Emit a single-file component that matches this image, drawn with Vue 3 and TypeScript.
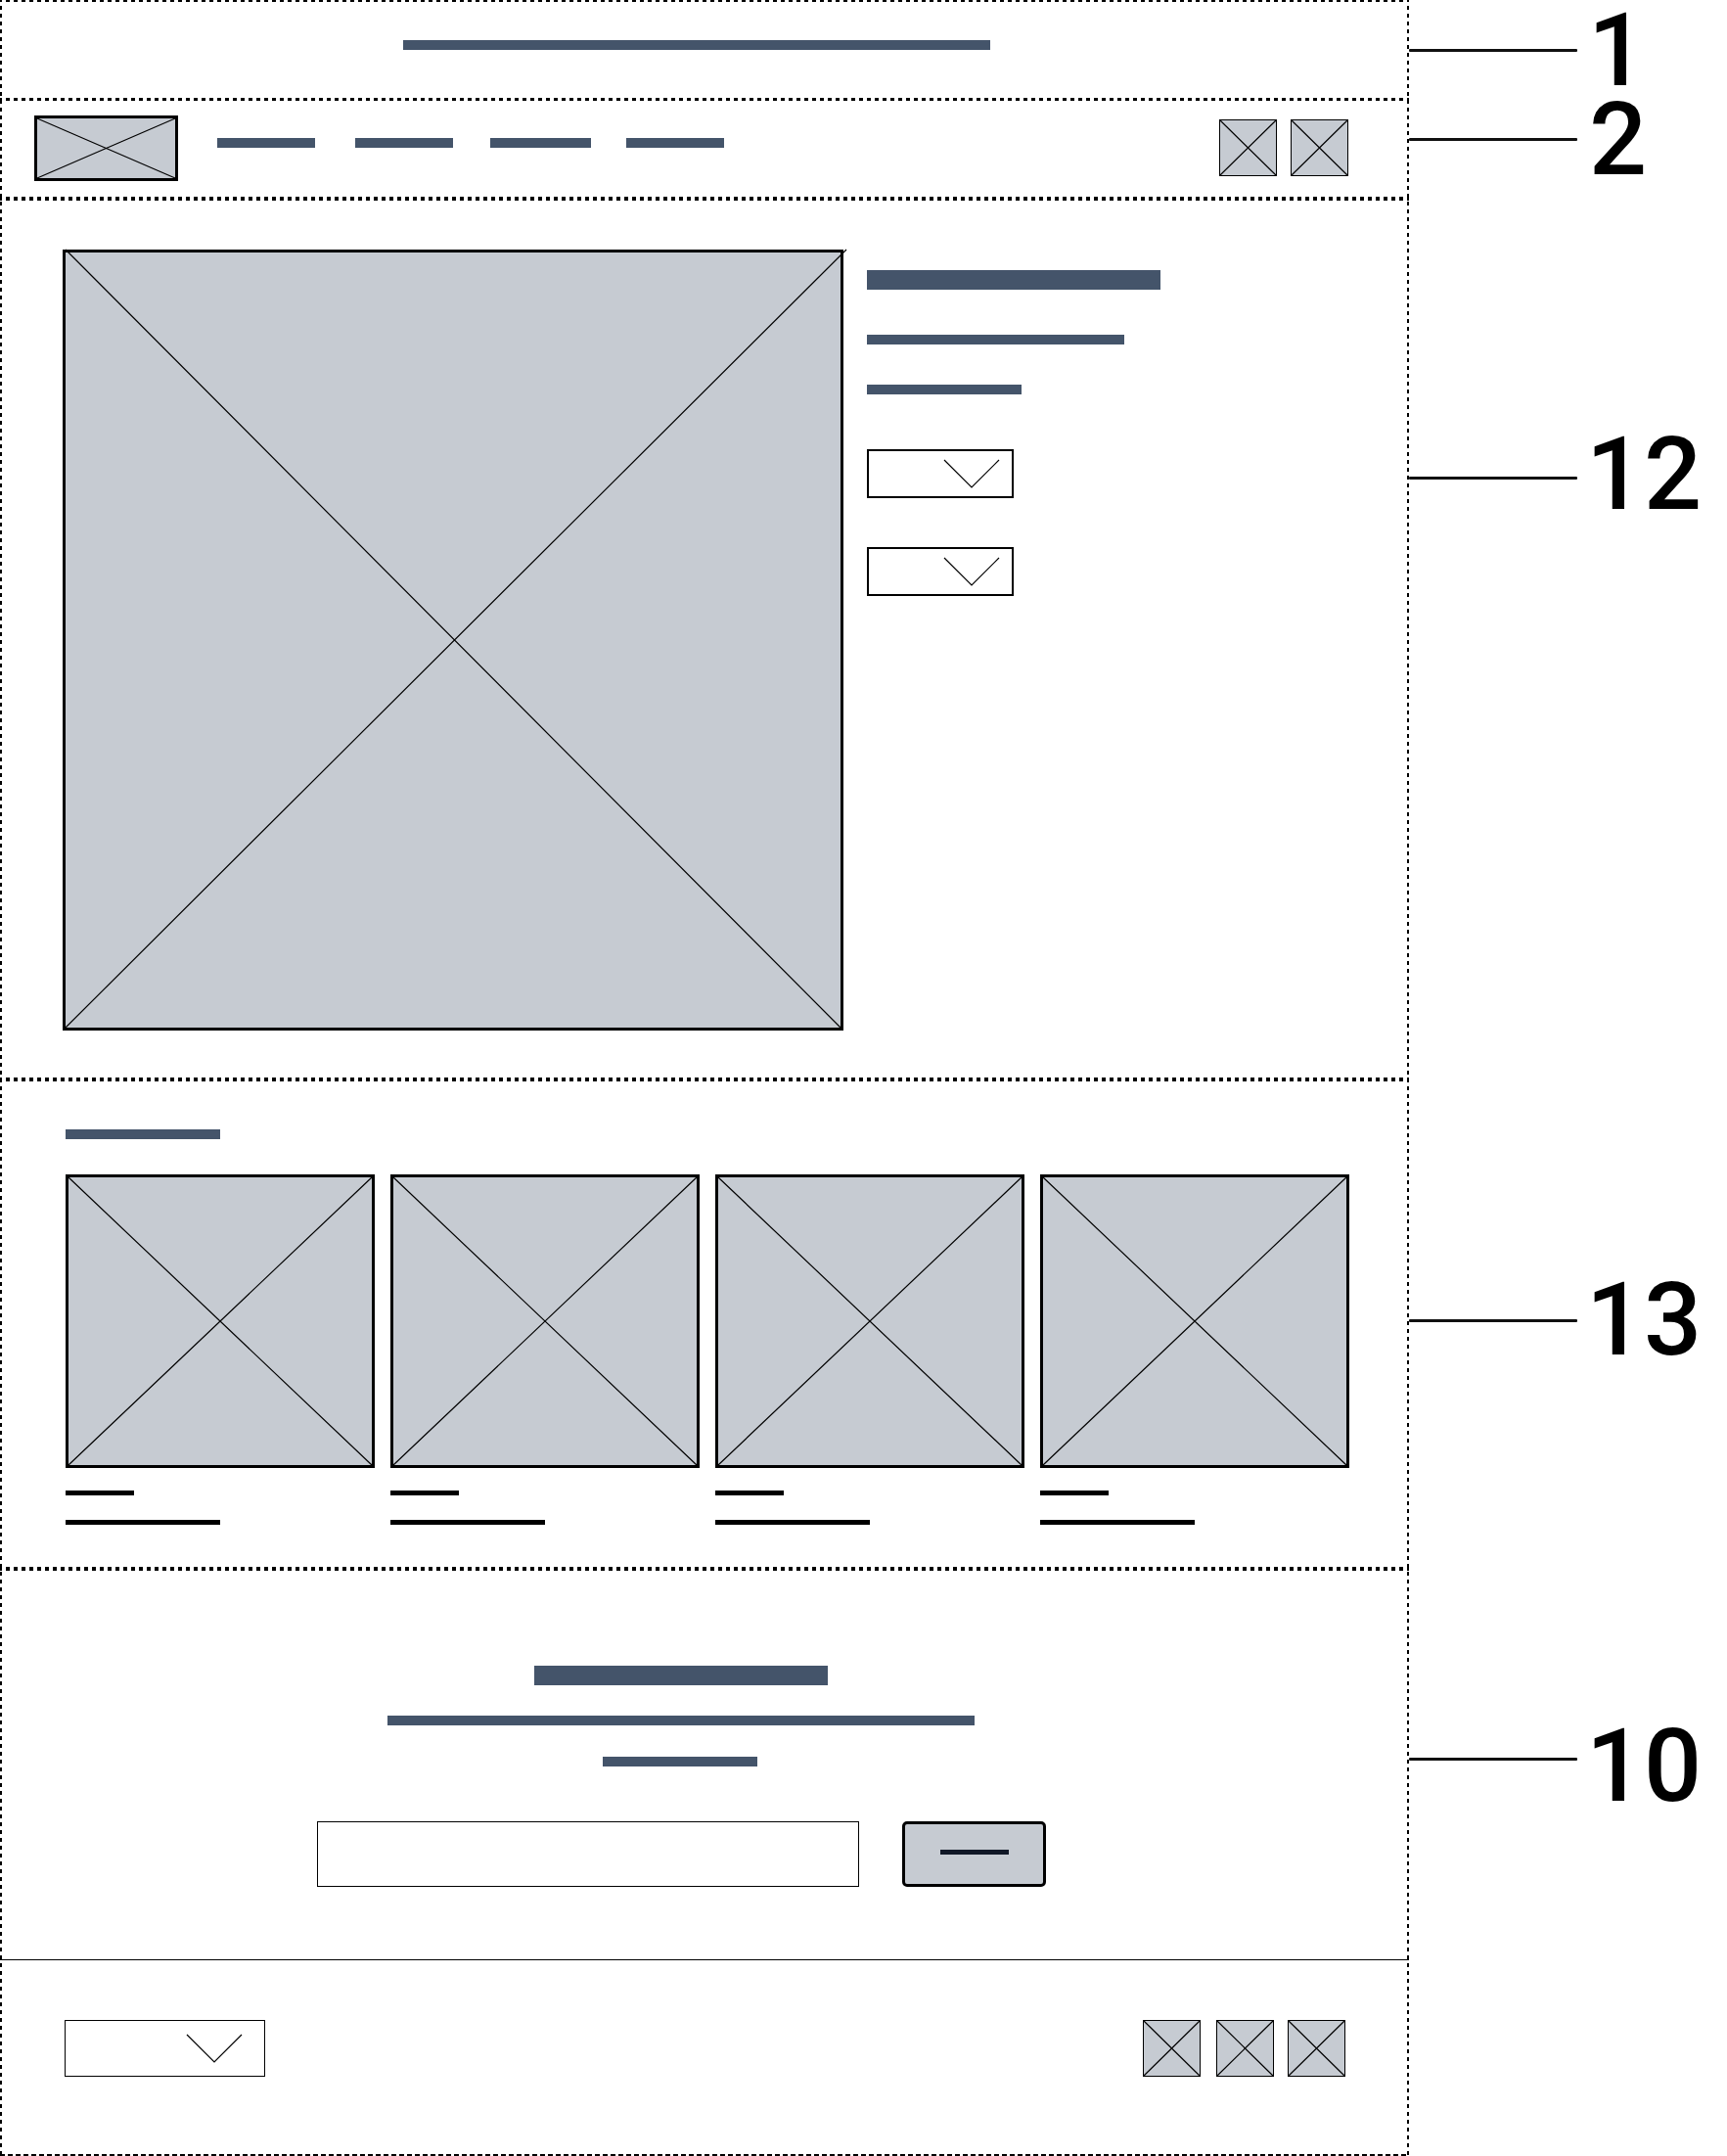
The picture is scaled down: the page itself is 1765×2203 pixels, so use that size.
<script setup lang="ts">
// nav bars in the wireframe are not evenly spaced
const navBars = [
  { width: 100, gap: 0 },
  { width: 100, gap: 41 },
  { width: 103, gap: 38 },
  { width: 100, gap: 36 },
];
const thumbs = [1, 2, 3, 4];

// y of the leader line, top and left of the digits, page coordinates
const callouts = [
  { label: '1', lineY: 50, textY: 15, textX: 1623 },
  { label: '2', lineY: 141, textY: 106, textX: 1624 },
  { label: '12', lineY: 487, textY: 448, textX: 1621 },
  { label: '13', lineY: 1348, textY: 1312, textX: 1621 },
  { label: '10', lineY: 1796, textY: 1768, textX: 1621 },
];
</script>

<template>
  <div class="page">
    <div class="sheet">
      <section class="promo">
        <div class="bar promo-bar"></div>
      </section>

      <header class="nav">
        <svg class="ph logo" viewBox="0 0 100 100" preserveAspectRatio="none">
          <path d="M0 0L100 100M100 0L0 100" vector-effect="non-scaling-stroke" />
        </svg>
        <div class="nav-bars">
          <div
            v-for="(b, i) in navBars"
            :key="i"
            class="bar nav-bar"
            :style="{ width: `${b.width}px`, marginLeft: `${b.gap}px` }"
          ></div>
        </div>
        <div class="nav-icons">
          <svg v-for="n in 2" :key="n" class="ph icon" viewBox="0 0 100 100" preserveAspectRatio="none">
            <path d="M0 0L100 100M100 0L0 100" vector-effect="non-scaling-stroke" />
          </svg>
        </div>
      </header>

      <section class="product">
        <!-- the cross in the big image sticks out past the frame at the top -->
        <svg class="ph hero" viewBox="0 0 100 100" preserveAspectRatio="none">
          <path d="M0 -0.38L100 100M100.76 -0.38L0 100" vector-effect="non-scaling-stroke" />
        </svg>
        <div class="details">
          <div class="bar title-bar"></div>
          <div class="bar price-bar"></div>
          <div class="bar sub-bar"></div>
          <div class="select first-select">
            <svg class="chevron" viewBox="0 0 56 28"><path d="M0 0L28 28L56 0" /></svg>
          </div>
          <div class="select second-select">
            <svg class="chevron" viewBox="0 0 56 28"><path d="M0 0L28 28L56 0" /></svg>
          </div>
        </div>
      </section>

      <section class="related">
        <div class="bar related-bar"></div>
        <div class="thumbs">
          <div v-for="t in thumbs" :key="t">
            <svg class="ph thumb" viewBox="0 0 100 100" preserveAspectRatio="none">
              <path d="M0 0L100 100M100 0L0 100" vector-effect="non-scaling-stroke" />
            </svg>
            <div class="line short"></div>
            <div class="line long"></div>
          </div>
        </div>
      </section>

      <section class="signup">
        <div class="bar signup-title"></div>
        <div class="bar signup-text"></div>
        <div class="bar signup-note"></div>
        <div class="form">
          <div class="input"></div>
          <div class="button"><div class="button-label"></div></div>
        </div>
      </section>

      <footer class="footer">
        <div class="select footer-select">
          <svg class="chevron" viewBox="0 0 56 28"><path d="M0 0L28 28L56 0" /></svg>
        </div>
        <div class="footer-icons">
          <svg v-for="n in 3" :key="n" class="ph icon" viewBox="0 0 100 100" preserveAspectRatio="none">
            <path d="M0 0L100 100M100 0L0 100" vector-effect="non-scaling-stroke" />
          </svg>
        </div>
      </footer>
    </div>

    <template v-for="c in callouts" :key="c.label">
      <div class="leader" :style="{ top: `${c.lineY}px` }"></div>
      <div class="label" :style="{ top: `${c.textY}px`, left: `${c.textX}px` }">{{ c.label }}</div>
    </template>
  </div>
</template>

<style scoped>
* {
  box-sizing: border-box;
}

.page {
  position: relative;
  width: 1765px;
  height: 2203px;
  background: #fff;
  overflow: hidden;
  font-family: Roboto, "Liberation Sans", sans-serif;
}

/* dashed left, right and bottom edges */
.sheet {
  display: flex;
  flex-direction: column;
  width: 1440px;
  height: 2203px;
  background-image:
    linear-gradient(#000 50%, transparent 50%),
    linear-gradient(#000 50%, transparent 50%),
    linear-gradient(to right, #000 62%, transparent 62%);
  background-size: 2px 8px, 2px 8px, 8px 2px;
  background-position: 0 6px, 1438px 6px, 0 2201px;
  background-repeat: repeat-y, repeat-y, repeat-x;
}

.promo,
.nav,
.product,
.related,
.signup {
  background-image: linear-gradient(to right, #000 50%, transparent 50%);
  background-size: 8px 3px;
  background-position: 6px 0;
  background-repeat: repeat-x;
}

.product,
.related,
.signup {
  background-size: 8px 4px;
}

.promo {
  height: 100px;
  padding: 41px 0 0 412px;
  background-size: 8px 2px;
}

.bar {
  height: 10px;
  background: #44546a;
}

.promo-bar {
  width: 600px;
}

.ph {
  display: block;
  flex: none;
  overflow: visible;
  background: #c6cbd2;
  border: 3px solid #000;
}

.ph path {
  fill: none;
  stroke: #000;
  stroke-width: 1.2;
}

.nav {
  display: flex;
  height: 101px;
  padding: 18px 62px 0 35px;
}

.logo {
  width: 147px;
  height: 67px;
}

.nav-bars {
  display: flex;
  margin: 23px 0 0 40px;
}

.nav-bar {
  flex: none;
}

.nav-icons {
  display: flex;
  gap: 14px;
  margin: 4px 0 0 auto;
}

.icon {
  width: 59px;
  height: 58px;
  border-width: 1px;
}

.product {
  display: flex;
  gap: 24px;
  height: 900px;
  padding: 54px 0 0 64px;
}

.hero {
  width: 798px;
  height: 798px;
}

.details {
  padding-top: 21px;
}

.title-bar {
  width: 300px;
  height: 20px;
}

.price-bar {
  width: 263px;
  margin-top: 46px;
}

.sub-bar {
  width: 158px;
  margin-top: 41px;
}

.select {
  display: flex;
  align-items: center;
  justify-content: flex-end;
  width: 150px;
  height: 50px;
  padding-right: 13px;
  border: 2px solid #000;
}

.first-select {
  margin-top: 56px;
}

.second-select {
  margin-top: 50px;
}

.chevron {
  display: block;
  width: 56px;
  height: 28px;
  overflow: visible;
}

.chevron path {
  fill: none;
  stroke: #000;
  stroke-width: 1.2;
}

.related {
  height: 500px;
  padding: 53px 0 0 67px;
}

.related-bar {
  width: 158px;
}

.thumbs {
  display: grid;
  grid-template-columns: repeat(4, 316px);
  gap: 16px;
  margin-top: 36px;
}

.thumb {
  width: 316px;
  height: 300px;
}

.line {
  height: 5px;
  background: #000;
}

.short {
  width: 70px;
  margin-top: 23px;
}

.long {
  width: 158px;
  margin-top: 25px;
}

.signup {
  display: flex;
  flex-direction: column;
  align-items: center;
  height: 401px;
  padding: 101px 48px 0 0;
}

.signup-title {
  width: 300px;
  height: 20px;
}

.signup-text {
  width: 600px;
  margin-top: 31px;
}

.signup-note {
  width: 158px;
  margin: 32px 2px 0 0;
}

.form {
  display: flex;
  gap: 44px;
  margin: 56px 0 0 1px;
}

.input {
  width: 554px;
  height: 67px;
  border: 1px solid #000;
}

.button {
  display: flex;
  align-items: center;
  justify-content: center;
  width: 147px;
  height: 67px;
  background: #c6cbd2;
  border: 3px solid #000;
  border-radius: 5px;
}

.button-label {
  width: 70px;
  height: 5px;
  margin-bottom: 4px;
  background: #111827;
}

.footer {
  display: flex;
  flex: 1;
  padding: 61px 65px 0 66px;
  border-top: 1px solid #000;
}

.footer-select {
  width: 205px;
  height: 58px;
  padding-right: 23px;
  border-width: 1px;
}

.footer-icons {
  display: flex;
  gap: 14px;
  margin-left: auto;
}

.footer-icons .icon:first-child {
  margin-right: 2px;
}

/* numbered callouts sit beside the sheet */
.leader {
  position: absolute;
  left: 1440px;
  width: 172px;
  height: 3px;
  background: #111;
  border-radius: 1px;
}

.label {
  position: absolute;
  color: #000;
  font-size: 104px;
  font-weight: 500;
  line-height: 74px;
  white-space: nowrap;
}
</style>
